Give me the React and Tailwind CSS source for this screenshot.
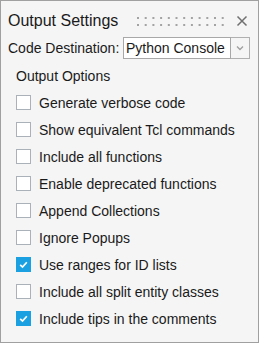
import React from "react";

const options = [
  { label: "Generate verbose code", on: false },
  { label: "Show equivalent Tcl commands", on: false },
  { label: "Include all functions", on: false },
  { label: "Enable deprecated functions", on: false },
  { label: "Append Collections", on: false },
  { label: "Ignore Popups", on: false },
  { label: "Use ranges for ID lists", on: true },
  { label: "Include all split entity classes", on: false },
  { label: "Include tips in the comments", on: true },
];

function Grip() {
  const dots = [];
  for (let r = 0; r < 2; r++)
    for (let c = 0; c < 12; c++)
      dots.push(<rect key={r + "-" + c} x={c * 7.7} y={1 + r * 7} width="2" height="2" fill="#a3a3a3" />);
  return <svg width="88" height="11" className="shrink-0">{dots}</svg>;
}

function Check({ on }) {
  if (on)
    return (
      <span className="w-[15px] h-[15px] bg-[#1ba1e2] flex items-center justify-center shrink-0">
        <svg width="11" height="11" viewBox="0 0 11 11">
          <path d="M2.2 5.8 L4.5 8 L8.8 3.2" fill="none" stroke="#fff" strokeWidth="1.7" />
        </svg>
      </span>
    );
  return <span className="w-[15px] h-[15px] border border-[#aab1b9] bg-white shrink-0" />;
}

export default function App() {
  return (
    <div className="w-[259px] h-[343px] border border-[#a0a0a0] bg-[#f5f5f5] text-[#1a1a1a] flex flex-col" style={{ fontFamily: '"Liberation Sans", Arial, sans-serif' }}>
      <div className="mt-[11px] h-[18px] flex items-center pl-[7px]">
        <span className="text-[16px] leading-[18px] w-[111px]">Output Settings</span>
        <span className="ml-[18px]"><Grip /></span>
        <svg width="12" height="12" viewBox="0 0 12 12" className="ml-[11px]">
          <path d="M1.5 1.5 L10.5 10.5 M10.5 1.5 L1.5 10.5" stroke="#707070" strokeWidth="1.5" />
        </svg>
      </div>

      <div className="mt-[7px] h-[22px] flex items-center pl-[7px]">
        <span className="text-[14px] leading-[16px] w-[115px]">Code Destination:</span>
        <div className="w-[108px] h-[22px] border border-[#a8a8a8] bg-white flex items-center pl-[2px] text-[14px] leading-[16px]">
          Python Console
        </div>
        <div className="w-[19px] h-[22px] border border-l-0 border-[#b0b0b0] bg-[#f5f5f5] flex items-center justify-center">
          <svg width="8" height="6" viewBox="0 0 8 6">
            <path d="M1 1.5 L4 4.5 L7 1.5" fill="none" stroke="#a0a0a0" strokeWidth="1.4" />
          </svg>
        </div>
      </div>

      <div className="mt-[9px] pl-[15px] text-[14px] leading-[16px]">Output Options</div>

      <div className="mt-[5px] flex flex-col">
        {options.map(o => (
          <div key={o.label} className="h-[27px] flex items-center pl-[15px] gap-[8px]">
            <Check on={o.on} />
            <span className="text-[14px] leading-[16px] pt-px">{o.label}</span>
          </div>
        ))}
      </div>
    </div>
  );
}
